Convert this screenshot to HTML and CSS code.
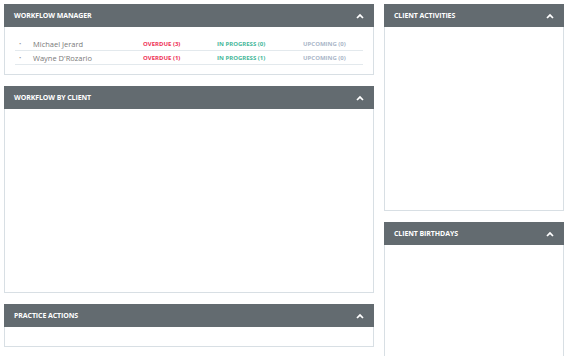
FILE: index.html
```html
<!DOCTYPE html>
<html lang="en">
<head>
  <meta charset="UTF-8">
  <title>Dashboard</title>
  <link rel="stylesheet" href="styles.css">
</head>
<body>
  <div class="dashboard">
    <div class="col col-main">
      <div class="panel">
        <div class="panel-head">
          <span>Workflow Manager</span>
          <svg class="chev" viewBox="0 0 8 6"><path d="M0.4 4.4 L4 0.8 L7.6 4.4 L6.4 5.6 L4 3.2 L1.6 5.6 Z"/></svg>
        </div>
        <div class="panel-body wf-body">
          <ul class="wf-list">
            <li>
              <span class="bullet">•</span>
              <span class="name">Michael Jerard</span>
              <span class="st overdue">Overdue (3)</span>
              <span class="st progress">In progress (0)</span>
              <span class="st upcoming">Upcoming (0)</span>
            </li>
            <li>
              <span class="bullet">•</span>
              <span class="name">Wayne D'Rozario</span>
              <span class="st overdue">Overdue (1)</span>
              <span class="st progress">In progress (1)</span>
              <span class="st upcoming">Upcoming (0)</span>
            </li>
          </ul>
        </div>
      </div>

      <div class="panel">
        <div class="panel-head">
          <span>Workflow by client</span>
          <svg class="chev" viewBox="0 0 8 6"><path d="M0.4 4.4 L4 0.8 L7.6 4.4 L6.4 5.6 L4 3.2 L1.6 5.6 Z"/></svg>
        </div>
        <div class="panel-body tall"></div>
      </div>

      <div class="panel">
        <div class="panel-head">
          <span>Practice actions</span>
          <svg class="chev" viewBox="0 0 8 6"><path d="M0.4 4.4 L4 0.8 L7.6 4.4 L6.4 5.6 L4 3.2 L1.6 5.6 Z"/></svg>
        </div>
        <div class="panel-body short"></div>
      </div>
    </div>

    <div class="col col-side">
      <div class="panel">
        <div class="panel-head">
          <span>Client activities</span>
          <svg class="chev" viewBox="0 0 8 6"><path d="M0.4 4.4 L4 0.8 L7.6 4.4 L6.4 5.6 L4 3.2 L1.6 5.6 Z"/></svg>
        </div>
        <div class="panel-body tall"></div>
      </div>

      <div class="panel">
        <div class="panel-head">
          <span>Client birthdays</span>
          <svg class="chev" viewBox="0 0 8 6"><path d="M0.4 4.4 L4 0.8 L7.6 4.4 L6.4 5.6 L4 3.2 L1.6 5.6 Z"/></svg>
        </div>
        <div class="panel-body tall"></div>
      </div>
    </div>
  </div>
</body>
</html>
```

FILE: styles.css
```css
body {
  margin: 0;
  padding: 4px;
  background: #fff;
  font-family: "Open Sans", sans-serif;
  overflow: hidden;
}
.dashboard {
  display: flex;
  gap: 10px;
  align-items: flex-start;
}
.col { display: flex; flex-direction: column; gap: 11px; }
.col-main { width: 370px; }
.col-side { width: 180px; }

.panel-head {
  height: 23px;
  background-color: #636b70;
  color: #fff;
  display: flex;
  align-items: center;
  justify-content: space-between;
  padding: 0 10px 0 10px;
  font-size: 7px;
  font-weight: 700;
  text-transform: uppercase;
  letter-spacing: -0.1px;
}
.chev { width: 8px; height: 6px; fill: #fff; }

.panel-body {
  border: 1px solid #d8dfe4;
  border-top: none;
  background: #fff;
}
.tall { height: 183px; }
.short { height: 19px; }

.wf-body { height: 48px; padding: 10px 10px 0; box-sizing: border-box; }
.wf-list { list-style: none; margin: 0; padding: 0; }
.wf-list li {
  display: flex;
  align-items: center;
  height: 13px;
  border-bottom: 1px solid #e3e9ed;
  font-size: 7.5px;
}
.bullet { width: 18px; padding-left: 4px; color: #999; font-size: 6px; box-sizing: border-box; }
.name { width: 110px; color: #7a7a7a; }
.st { font-size: 6px; font-weight: 700; text-transform: uppercase; }
.overdue { width: 74px; color: #ee2f55; }
.progress { width: 86px; color: #45b79a; }
.upcoming { color: #aab6c8; }
```
